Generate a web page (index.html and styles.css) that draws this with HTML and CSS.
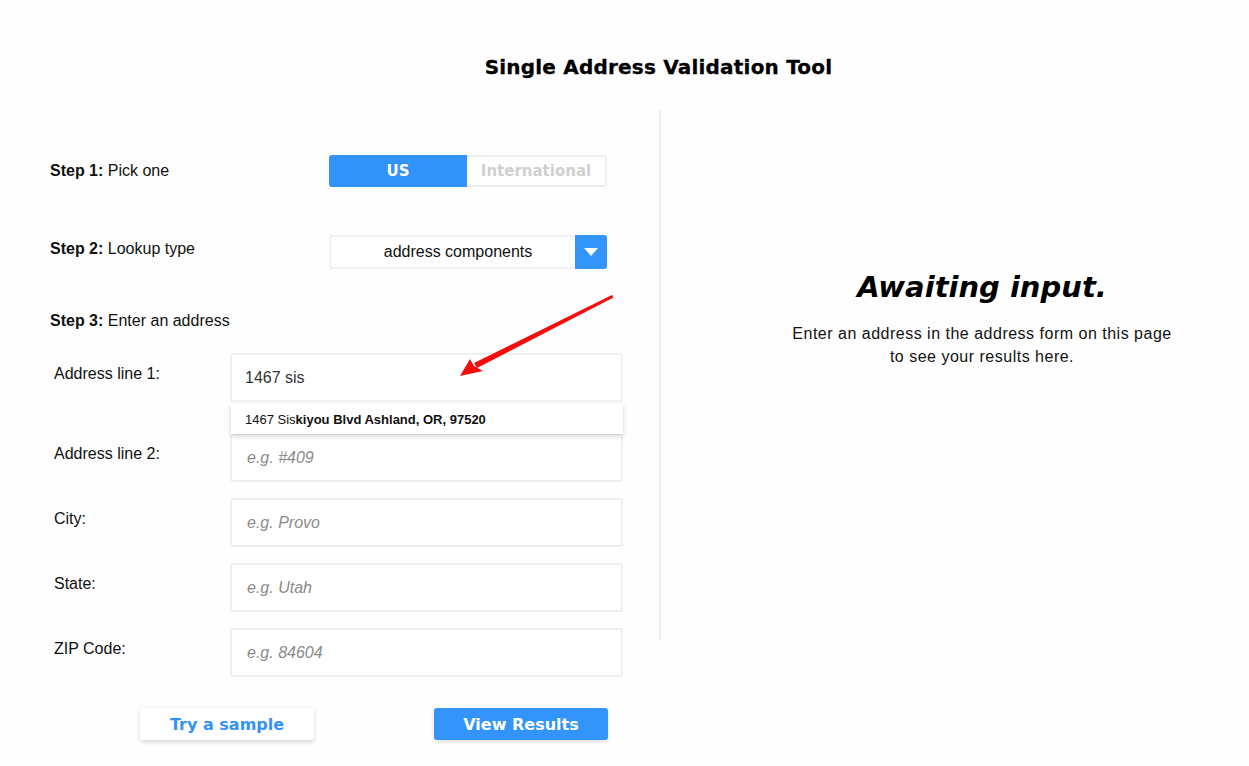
FILE: index.html
```html
<!DOCTYPE html>
<html lang="en">
<head>
<meta charset="utf-8">
<title>Single Address Validation Tool</title>
<link rel="stylesheet" href="styles.css">
</head>
<body>
<header class="header">
  <h1 class="title">Single Address Validation Tool</h1>
</header>
<main class="main">
  <section class="left">
    <div class="step-row">
      <div class="step-label"><b>Step 1:</b> Pick one</div>
      <div class="toggle">
        <span class="toggle-btn active">US</span>
        <span class="toggle-btn">International</span>
      </div>
    </div>
    <div class="step-row step-row-2">
      <div class="step-label step-label-up"><b>Step 2:</b> Lookup type</div>
      <div class="select">
        <span class="select-text">address components</span>
        <span class="select-arrow">
          <svg width="14" height="8" viewBox="0 0 14 8"><path d="M0 0 L14 0 L7 8 Z" fill="#fff"/></svg>
        </span>
      </div>
    </div>
    <div class="step-label step3"><b>Step 3:</b> Enter an address</div>
    <div class="form">
      <div class="field field-first">
        <label class="field-label">Address line 1:</label>
        <div class="field-box">
          <input class="input" type="text" value="1467 sis">
          <div class="suggest"><span>1467 Sis</span><b>kiyou Blvd Ashland, OR, 97520</b></div>
        </div>
      </div>
      <div class="field">
        <label class="field-label">Address line 2:</label>
        <div class="field-box"><input class="input" type="text" placeholder="e.g. #409"></div>
      </div>
      <div class="field">
        <label class="field-label">City:</label>
        <div class="field-box"><input class="input" type="text" placeholder="e.g. Provo"></div>
      </div>
      <div class="field">
        <label class="field-label">State:</label>
        <div class="field-box"><input class="input" type="text" placeholder="e.g. Utah"></div>
      </div>
      <div class="field">
        <label class="field-label">ZIP Code:</label>
        <div class="field-box"><input class="input" type="text" placeholder="e.g. 84604"></div>
      </div>
    </div>
    <div class="actions">
      <button class="btn btn-light">Try a sample</button>
      <button class="btn btn-blue">View Results</button>
    </div>
  </section>
  <section class="right">
    <h2 class="await">Awaiting input.</h2>
    <p class="await-text">Enter an address in the address form on this page<br>to see your results here.</p>
  </section>
</main>
<svg class="annot-arrow" width="170" height="95" viewBox="0 0 170 95">
  <path d="M157 5 L158.5 7.5 L22 78 L19 73 Z" fill="#f50d0d"/>
  <path d="M5 86 L15 69 L19 76 L28 81 Z" fill="#f50d0d"/>
</svg>
</body>
</html>
```

FILE: styles.css
```css
html, body {
  margin: 0;
  padding: 0;
}
body {
  background: #fefefe;
  font-family: "Liberation Sans", Arial, sans-serif;
  font-size: 16px;
  color: #111;
  position: relative;
  width: 1249px;
  height: 766px;
  overflow: hidden;
}
.header {
  padding-top: 55px;
  padding-left: 68px;
  text-align: center;
}
.title {
  margin: 0;
  font-family: "DejaVu Sans", sans-serif;
  font-weight: bold;
  font-size: 20px;
  line-height: 24px;
  letter-spacing: 0.2px;
  color: #000;
  -webkit-text-stroke: 0.3px #000;
}
.main {
  display: flex;
  margin-top: 31px;
}
.left {
  width: 659px;
  box-sizing: border-box;
  padding-top: 45px;
  padding-left: 50px;
  display: flex;
  flex-direction: column;
}
.step-row {
  display: flex;
  align-items: center;
}
.step-row-2 {
  margin-top: 48px;
}
.step-label {
  width: 279px;
  line-height: 18px;
  color: #111;
}
.step-label-up {
  padding-bottom: 7px;
}
.step-label b {
  font-weight: bold;
}
.step3 {
  margin-top: 43px;
  margin-bottom: 1px;
}
.toggle {
  display: flex;
  width: 278px;
  height: 32px;
}
.toggle-btn {
  flex: 1;
  display: flex;
  align-items: center;
  justify-content: center;
  font-family: "DejaVu Sans", sans-serif;
  font-weight: bold;
  font-size: 15px;
  color: #cfcfcf;
  border: 2px solid #eeeeee;
  border-left: none;
  border-radius: 0 3px 3px 0;
  background: #fff;
}
.toggle-btn.active {
  background: #3192fa;
  color: #fff;
  border: none;
  border-radius: 3px 0 0 3px;
}
.select {
  display: flex;
  width: 278px;
  height: 34px;
  box-sizing: border-box;
  border: 2px solid #eef0f3;
  border-right: none;
  border-radius: 3px;
  background: #fff;
}
.select-text {
  flex: 1;
  display: flex;
  align-items: center;
  justify-content: center;
  padding-left: 10px;
  color: #111;
}
.select-arrow {
  width: 32px;
  margin: -2px 0;
  background: #3394fb;
  border-radius: 0 3px 3px 0;
  display: flex;
  align-items: center;
  justify-content: center;
}
.form {
  margin-top: 22px;
  margin-left: 4px;
  display: flex;
  flex-direction: column;
  gap: 16px;
}
.field {
  display: flex;
  align-items: flex-start;
}
.field-first {
  margin-bottom: 15px;
}
.field-label {
  width: 176px;
  padding-top: 12px;
  line-height: 18px;
  color: #111;
}
.field-box {
  position: relative;
  width: 393px;
}
.input {
  display: block;
  width: 393px;
  height: 49px;
  box-sizing: border-box;
  margin: 0;
  border: 2px solid #edf0f3;
  border-radius: 3px;
  padding: 0 13px;
  font-family: "Liberation Sans", Arial, sans-serif;
  font-size: 16px;
  color: #333;
  background: #fff;
  outline: none;
}
.input::placeholder {
  font-style: italic;
  color: #8a8a8a;
  padding-left: 2px;
}
.suggest {
  position: absolute;
  left: 1px;
  top: 51px;
  width: 392px;
  height: 30px;
  box-sizing: border-box;
  padding-left: 14px;
  display: flex;
  align-items: center;
  background: #fff;
  font-size: 13px;
  color: #111;
  box-shadow: 0 2px 5px rgba(0, 0, 0, 0.18);
  z-index: 2;
}
.suggest b {
  font-weight: bold;
}
.actions {
  display: flex;
  margin-top: 31px;
  padding-left: 90px;
  gap: 120px;
}
.btn {
  width: 174px;
  height: 32px;
  border: none;
  border-radius: 3px;
  font-family: "DejaVu Sans", sans-serif;
  font-weight: bold;
  font-size: 16px;
  padding: 0;
  cursor: pointer;
}
.btn-light {
  background: #fff;
  color: #3392fa;
  box-shadow: 0 2px 5px rgba(0, 0, 0, 0.16);
}
.btn-blue {
  background: #3394fc;
  color: #fff;
  box-shadow: 0 2px 4px rgba(0, 0, 0, 0.12);
}
.right {
  width: 590px;
  height: 530px;
  box-sizing: border-box;
  border-left: 2px solid #e8edf3;
  padding-top: 159px;
  padding-left: 54px;
  text-align: center;
}
.await {
  margin: 0;
  font-family: "DejaVu Sans", sans-serif;
  font-weight: bold;
  font-style: italic;
  font-size: 29px;
  line-height: 36px;
  color: #000;
}
.await-text {
  margin: 17px 0 0;
  line-height: 23px;
  letter-spacing: 0.5px;
  color: #111;
}
.annot-arrow {
  position: absolute;
  left: 455px;
  top: 290px;
  z-index: 3;
}
```
